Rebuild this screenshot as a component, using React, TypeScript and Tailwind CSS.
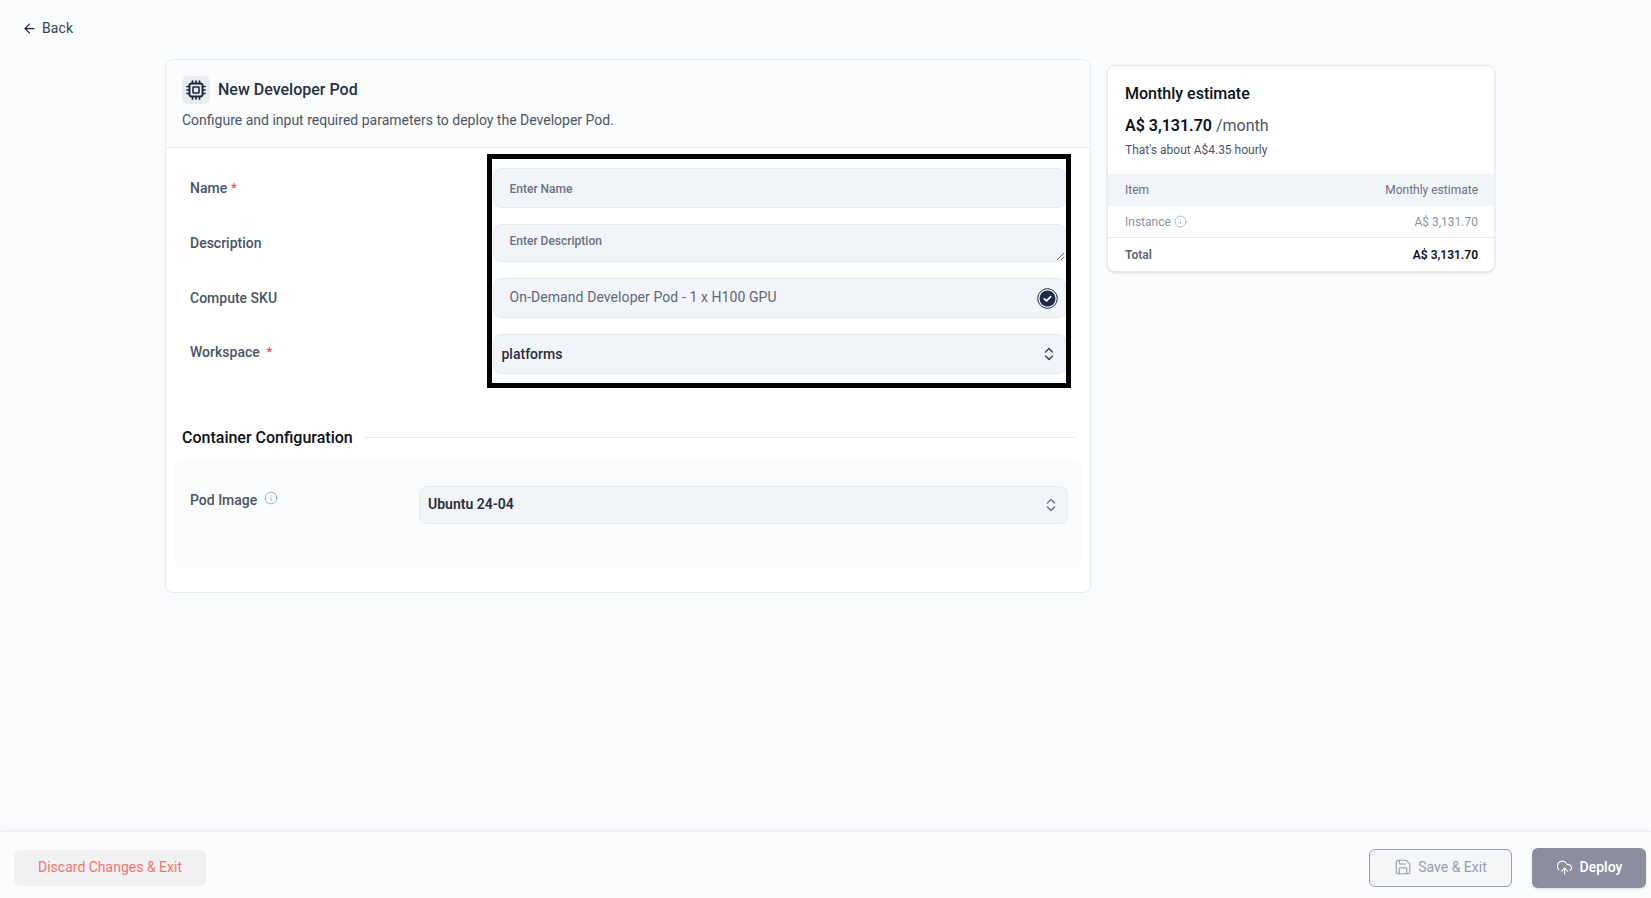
import { ArrowLeft, CloudUpload, Info, Save } from "lucide-react";

const Chevrons = ({ color = "#374151" }: { color?: string }) => (
  <svg width="12" height="16" viewBox="0 0 12 16" fill="none" stroke={color} strokeWidth="1.400" strokeLinecap="round" strokeLinejoin="round">
    <path d="M2.500 6 6 2.500 9.500 6" />
    <path d="M2.500 10 6 13.500 9.500 10" />
  </svg>
);

const ChipIcon = () => (
  <svg width="20" height="20" viewBox="0 0 20 20" fill="none" stroke="#1e2a44" strokeLinecap="round">
    <rect x="3.500" y="3.500" width="13" height="13" rx="2" strokeWidth="1.900" />
    <rect x="7" y="7" width="6" height="6" rx="0.500" strokeWidth="1.600" />
    <path strokeWidth="1.700" d="M6.500 1v1.500M10 1v1.500M13.500 1v1.500M6.500 17.500V19M10 17.500V19M13.500 17.500V19M1 6.500h1.500M1 10h1.500M1 13.500h1.500M17.500 6.500H19M17.500 10H19M17.500 13.500H19" />
  </svg>
);

const CheckBadge = () => (
  <svg width="21" height="21" viewBox="0 0 21 21" fill="none">
    <circle cx="10.500" cy="10.500" r="9.800" stroke="#1e2a4a" strokeWidth="1" />
    <circle cx="10.500" cy="10.500" r="8" fill="#1e2a4a" />
    <path d="M7.300 10.800 9.500 12.800 13.700 8.700" stroke="#ffffff" strokeWidth="1.700" strokeLinecap="round" strokeLinejoin="round" />
  </svg>
);

export default function App() {
  return (
    <div className="h-screen w-full flex flex-col bg-[#fafbfd] overflow-hidden font-['Roboto',sans-serif]">
      <div className="flex h-[56px] items-center gap-[5px] pl-[22px] text-[14px] tracking-[0.1px] text-[#374151]">
        <ArrowLeft size={15} strokeWidth={2} className="text-[#1f2937] mt-[1px]" />
        <span>Back</span>
      </div>

      <main className="flex flex-1 items-start gap-[16px] pl-[165px] pt-[3px]">
        <section className="w-[926px] h-[534px] rounded-lg border border-[#e5eaf2] bg-white flex flex-col overflow-hidden">
          <header className="h-[88px] shrink-0 border-b border-[#e5eaf2] bg-[#fafbfd] px-[16px] pt-[16px]">
            <div className="flex items-center gap-[8px]">
              <div className="flex h-[28px] w-[28px] items-center justify-center rounded-md bg-[#e9ebef]">
                <ChipIcon />
              </div>
              <h1 className="text-[16px] font-medium text-[#27303f]">New Developer Pod</h1>
            </div>
            <p className="mt-[6px] text-[14px] leading-[20px] text-[#4b5563]">
              Configure and input required parameters to deploy the Developer Pod.
            </p>
          </header>

          <div className="flex pl-[24px] pt-[6px]">
            <div className="w-[297px] shrink-0 pt-[24px] text-[14px] font-medium text-[#4b5563]">
              <div className="flex h-[20px] items-center gap-[4px]">
                Name <span className="text-[12px] text-[#ef4444]">*</span>
              </div>
              <div className="mt-[35px] flex h-[20px] items-center">Description</div>
              <div className="mt-[35px] flex h-[20px] items-center">Compute SKU</div>
              <div className="mt-[34px] flex h-[20px] items-center gap-[7px]">
                Workspace <span className="text-[12px] text-[#ef4444]">*</span>
              </div>
            </div>

            <div className="w-[584px] border-[5px] border-black pl-[1px] pt-[9px] pb-[9px]">
              <input
                placeholder="Enter Name"
                className="block h-[40px] w-[573px] rounded-lg border border-[#e5eaf2] bg-[#f1f4f9] pl-[15.5px] pr-[16px] pt-[2px] text-[12px] font-medium outline-none placeholder:text-[#6b7280]"
              />
              <textarea
                placeholder="Enter Description"
                className="mt-[16px] block h-[38px] w-[573px] resize-y rounded-lg border border-[#e5eaf2] bg-[#f1f4f9] pl-[15.5px] pr-[16px] pt-[8px] text-[12px] font-medium leading-[16px] outline-none placeholder:text-[#6b7280]"
              />
              <div className="mt-[16px] flex h-[40px] w-[573px] items-center justify-between rounded-lg border border-[#e5eaf2] bg-[#f1f4f9] pl-[15.5px] pr-[7px] text-[14px] tracking-[0.08px] text-[#5f6875]">
                <span className="-mt-[2px]">On-Demand Developer Pod - 1 x H100 GPU</span>
                <CheckBadge />
              </div>
              <div className="mt-[16px] flex h-[40px] w-[573px] items-center justify-between rounded-lg border border-[#e5eaf2] bg-[#f1f4f9] pl-[7.5px] pr-[10px] text-[14px] font-medium text-[#27303f]">
                <span>platforms</span>
                <Chevrons />
              </div>
            </div>
          </div>

          <div className="mt-[38px] flex items-center gap-[12px] pl-[16px] pr-[16px]">
            <h2 className="text-[16px] leading-[24px] font-medium text-[#0b0f19]">Container Configuration</h2>
            <div className="-mt-[2px] h-px flex-1 bg-[#e5eaf2]" />
          </div>

          <div className="mx-[8px] mt-[8px] flex h-[110px] items-start rounded-lg bg-[#fafbfc] pl-[16px] pt-[28px]">
            <div className="flex w-[229px] shrink-0 items-center gap-[7px] pt-[4px] text-[14px] leading-[20px] font-medium text-[#4b5563]">
              <span>Pod Image</span>
              <Info size={14} strokeWidth={1.500} className="-mt-[4px] text-[#9ca3af]" />
            </div>
            <div className="flex h-[38px] w-[649px] items-center justify-between rounded-lg border border-[#e5eaf2] bg-[#f1f4f9] pl-[8px] pr-[10px] text-[14px] font-semibold text-[#27303f]">
              <span className="-mt-[1px]">Ubuntu 24-04</span>
              <Chevrons color="#6b7280" />
            </div>
          </div>
        </section>

        <aside className="mt-[6px] w-[388px] overflow-hidden rounded-lg border border-[#e5eaf2] bg-white shadow-sm">
          <div className="h-[108px] pl-[17px] pr-[16px] pt-[16px]">
            <h3 className="text-[16px] leading-[24px] font-medium text-[#0b0f19]">Monthly estimate</h3>
            <p className="mt-[8px] text-[16px] leading-[24px] text-[#4b5563]">
              <span className="font-semibold text-[#0b0f19]">A$ 3,131.70</span> /month
            </p>
            <p className="mt-[4px] text-[12px] leading-[16px] text-[#4b5563]">That's about A$4.35 hourly</p>
          </div>
          <div className="flex h-[32px] items-center justify-between bg-[#f1f4f9] pl-[17px] pr-[16px] text-[12px] text-[#6b7280]">
            <span>Item</span>
            <span>Monthly estimate</span>
          </div>
          <div className="flex h-[32px] items-center justify-between border-b border-[#e5eaf2] pl-[17px] pr-[16px] text-[12px] text-[#8b919c]">
            <span className="flex items-center gap-[3px]">
              Instance <Info size={13} strokeWidth={1.500} className="text-[#a4a9b2]" />
            </span>
            <span>A$ 3,131.70</span>
          </div>
          <div className="flex h-[33px] items-center justify-between pl-[17px] pr-[16px] text-[12px] font-semibold">
            <span className="text-[#5b6472]">Total</span>
            <span className="text-[#0b0f19]">A$ 3,131.70</span>
          </div>
        </aside>
      </main>

      <footer className="flex h-[67px] shrink-0 items-center justify-between border-t border-[#eceef1] bg-[#fafbfd] pl-[14px] pr-[5px] pt-[6px] shadow-[0_-2px_4px_rgba(0,0,0,0.03)]">
        <button className="h-[36px] w-[192px] rounded-md bg-[#f0f1f3] pb-[2px] text-[14px] text-[#f87171]">
          Discard Changes &amp; Exit
        </button>
        <div className="flex items-center gap-[20px]">
          <button className="flex h-[38px] w-[143px] items-center justify-center gap-[6px] rounded-md border border-[#9a9db0] bg-[#f5f6f8] pb-[2px] text-[14px] text-[#9a9daf]">
            <Save size={18} strokeWidth={1.500} />
            Save &amp; Exit
          </button>
          <button className="flex h-[40px] w-[114px] items-center justify-center gap-[7px] rounded-md bg-[#8b8e9e] pb-[2px] text-[14px] font-medium text-white shadow-sm">
            <CloudUpload size={17} strokeWidth={1.600} />
            Deploy
          </button>
        </div>
      </footer>
    </div>
  );
}
